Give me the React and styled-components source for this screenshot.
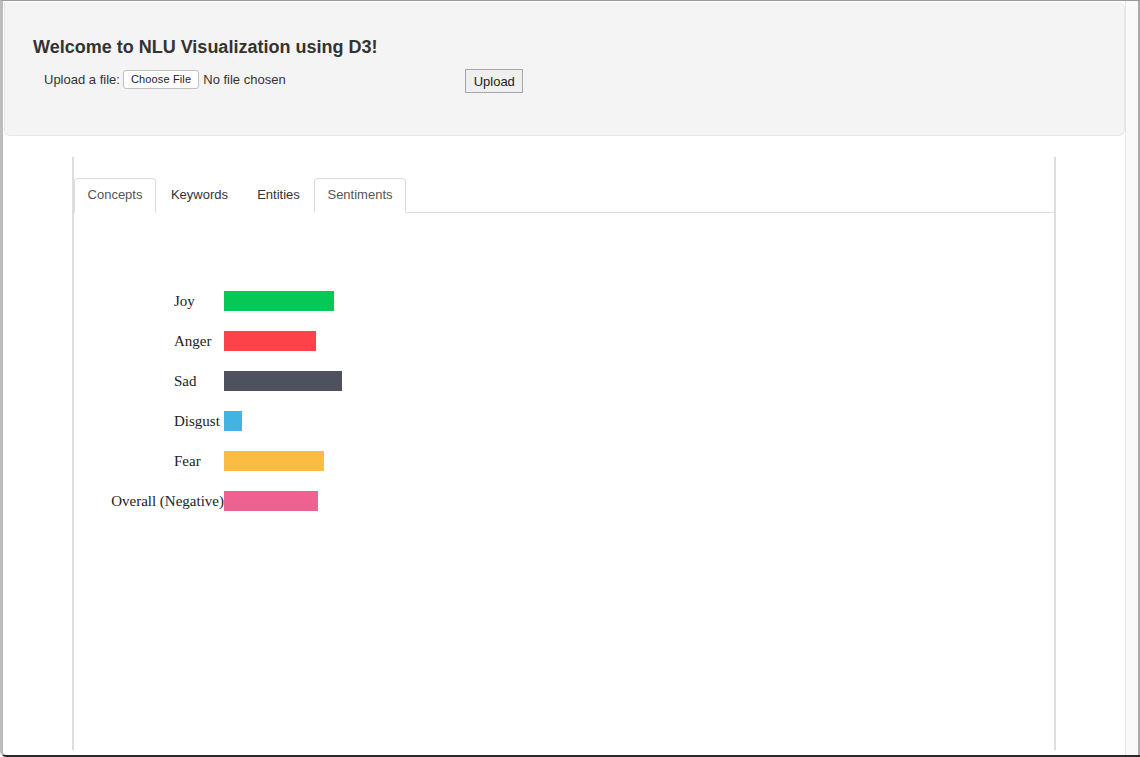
import React from 'react'
import styled, { createGlobalStyle } from 'styled-components'

const GlobalStyle = createGlobalStyle`
  html, body {
    margin: 0;
    padding: 0;
    background: #ffffff;
    overflow: hidden;
  }
  body {
    font-family: "Liberation Sans", Arial, sans-serif;
    color: #333333;
  }
`

const Frame = styled.div`
  display: flex;
  width: 1140px;
  height: 757px;
  box-sizing: border-box;
  border-top: 1px solid #9a9a9a;
  border-left: 3px solid #bcbcbc;
  border-bottom: 2px solid #2a2a2a;
  border-bottom-left-radius: 6px;
  overflow: hidden;
`

const Page = styled.div`
  flex: 1;
  display: flex;
  flex-direction: column;
  padding-left: 1px;
  padding-top: 1px;
  min-width: 0;
`

const Gutter = styled.div`
  width: 12px;
  background: #f9f9f9;
  border-left: 1px solid #e6e6e6;
  border-right: 2px solid #a9a9a9;
`

const Jumbotron = styled.header`
  height: 134px;
  box-sizing: border-box;
  background: #f4f4f4;
  border: 1px solid #e6e6e6;
  border-top: 0;
  border-radius: 0 6px 6px 6px;
  padding: 34px 0 0 28px;
`

const Title = styled.h1`
  margin: 0 0 12px;
  font-size: 18px;
  line-height: 22px;
  font-weight: bold;
  color: #333333;
`

const UploadRow = styled.form`
  display: flex;
  align-items: flex-start;
  padding-left: 11px;
  font-size: 13px;
  line-height: 19px;
  color: #333;
`

const FileLabel = styled.span`
  margin-right: 3px;
`

const ChooseButton = styled.span`
  display: inline-block;
  box-sizing: border-box;
  height: 19px;
  line-height: 17px;
  padding: 0 7px;
  font-size: 11px;
  letter-spacing: 0.15px;
  background: #ffffff;
  border: 1px solid #c0c0c0;
  border-radius: 3px;
  color: #222;
`

const FileName = styled.span`
  margin-left: 4px;
  width: 262px;
`

const UploadButton = styled.button`
  box-sizing: border-box;
  height: 24px;
  width: 58px;
  margin-top: -1px;
  padding: 0;
  font-family: "Liberation Sans", Arial, sans-serif;
  font-size: 13px;
  color: #222;
  background: #efefef;
  border: 1px solid #a8a8a8;
  border-radius: 0;
`

const Panel = styled.main`
  flex: 1;
  margin: 21px 0 5px 68px;
  width: 980px;
  border-left: 2px solid #dddddd;
  border-right: 2px solid #dddddd;
  padding-top: 21px;
`

const TabList = styled.nav`
  display: flex;
  height: 35px;
  box-sizing: border-box;
  border-bottom: 1px solid #dddddd;
`

const Tab = styled.div`
  box-sizing: border-box;
  height: 35px;
  width: ${p => p.$width}px;
  text-align: center;
  line-height: 31px;
  font-size: 13px;
  color: ${p => (p.$boxed ? '#555555' : '#333333')};
  border: 1px solid ${p => (p.$boxed ? '#dddddd' : 'transparent')};
  border-bottom-color: ${p => (p.$boxed ? '#ffffff' : 'transparent')};
  border-radius: 4px 4px 0 0;
  background: #ffffff;
`

const ChartArea = styled.section`
  padding-top: 0;
`

const ChartLabel = styled.text`
  font-family: "Liberation Serif", "Times New Roman", serif;
  font-size: 15px;
  fill: #222222;
`

const tabs = [
  { name: 'Concepts', boxed: true, width: 82 },
  { name: 'Keywords', boxed: false, width: 87 },
  { name: 'Entities', boxed: false, width: 71 },
  { name: 'Sentiments', boxed: true, width: 92 },
]

const emotions = [
  { label: 'Joy', value: 110, color: '#06c955' },
  { label: 'Anger', value: 92, color: '#fd4349' },
  { label: 'Sad', value: 118, color: '#4e525e' },
  { label: 'Disgust', value: 18, color: '#42b4e3' },
  { label: 'Fear', value: 100, color: '#fcbb41' },
  { label: 'Overall (Negative)', value: 94, color: '#ef6191', anchorEnd: true },
]

const SentimentChart = () => (
  <svg width="400" height="320">
    {emotions.map((e, i) => {
      const y = 78 + i * 40
      return (
        <g key={e.label}>
          <ChartLabel
            x={e.anchorEnd ? 150 : 100}
            y={y + 15}
            textAnchor={e.anchorEnd ? 'end' : 'start'}
          >
            {e.label}
          </ChartLabel>
          <rect x="150" y={y} width={e.value} height="20" fill={e.color} />
        </g>
      )
    })}
  </svg>
)

const App = () => (
  <>
    <GlobalStyle />
    <Frame>
      <Page>
        <Jumbotron>
          <Title>Welcome to NLU Visualization using D3!</Title>
          <UploadRow>
            <FileLabel>Upload a file:</FileLabel>
            <ChooseButton>Choose File</ChooseButton>
            <FileName>No file chosen</FileName>
            <UploadButton type="button">Upload</UploadButton>
          </UploadRow>
        </Jumbotron>
        <Panel>
          <TabList>
            {tabs.map(t => (
              <Tab key={t.name} $boxed={t.boxed} $width={t.width}>
                {t.name}
              </Tab>
            ))}
          </TabList>
          <ChartArea>
            <SentimentChart />
          </ChartArea>
        </Panel>
      </Page>
      <Gutter />
    </Frame>
  </>
)

export default App
